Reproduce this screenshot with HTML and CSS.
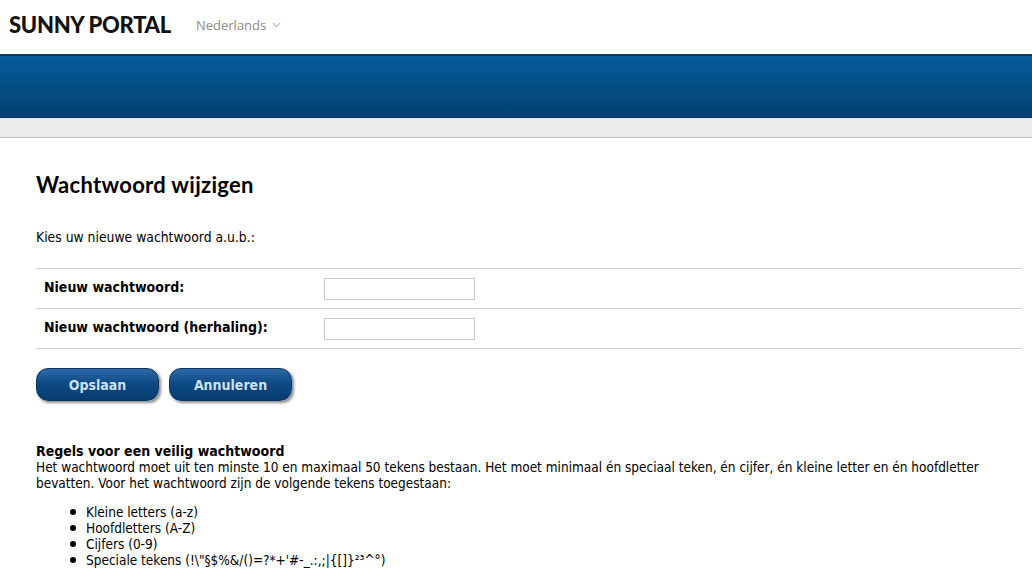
FILE: index.html
```html
<!DOCTYPE html>
<html lang="nl">
<head>
  <meta charset="UTF-8" />
  <title>Sunny Portal - Wachtwoord wijzigen</title>
  <link rel="stylesheet" href="styles.css">
</head>
<body>
  <header class="topbar">
    <div class="logo">SUNNY PORTAL</div>
    <div class="lang">Nederlands
      <svg class="chev" width="9" height="6" viewBox="0 0 9 6"><path d="M1 1 L4.5 4.5 L8 1" fill="none" stroke="#bbb" stroke-width="1.2"/></svg>
    </div>
  </header>
  <div class="banner"></div>
  <div class="subbar"></div>

  <main class="content">
    <h1>Wachtwoord wijzigen</h1>
    <p class="intro">Kies uw nieuwe wachtwoord a.u.b.:</p>

    <div class="form-table">
      <div class="form-row">
        <label>Nieuw wachtwoord:</label>
        <input type="password">
      </div>
      <div class="form-row">
        <label>Nieuw wachtwoord (herhaling):</label>
        <input type="password">
      </div>
    </div>

    <div class="buttons">
      <button class="btn">Opslaan</button>
      <button class="btn">Annuleren</button>
    </div>

    <div class="rules">
      <strong>Regels voor een veilig wachtwoord</strong><br>
      Het wachtwoord moet uit ten minste 10 en maximaal 50 tekens bestaan. Het moet minimaal én speciaal teken, én cijfer, én kleine letter en én hoofdletter bevatten. Voor het wachtwoord zijn de volgende tekens toegestaan:
      <ul>
        <li>Kleine letters (a-z)</li>
        <li>Hoofdletters (A-Z)</li>
        <li>Cijfers (0-9)</li>
        <li>Speciale tekens (!\"§$%&amp;/()=?*+'#-_.:,;|{[]}²³^°)</li>
      </ul>
    </div>
  </main>
</body>
</html>
```

FILE: styles.css
```css
* { margin: 0; padding: 0; box-sizing: border-box; }

body {
  font-family: 'DejaVu Sans Condensed', 'DejaVu Sans', sans-serif;
  font-size: 13.5px;
  color: #000;
  background: #fff;
}

/* header */
.topbar {
  height: 54px;
  display: flex;
  align-items: center;
  padding: 0 0 6px 9px;
}
.logo {
  font-family: 'Lato', sans-serif;
  font-weight: 900;
  font-size: 22px;
  letter-spacing: -0.3px;
  color: #111;
}
.lang {
  margin-left: 25px;
  font-family: 'Open Sans', sans-serif;
  font-size: 13px;
  color: #8a8a8a;
  display: flex;
  align-items: center;
  gap: 6px;
  padding-top: 2px;
}

.banner {
  height: 64px;
  border-top: 2px solid #0b3a5f;
  border-bottom: 1px solid #02325a;
  background: linear-gradient(#055c9c, #03406f);
}
.subbar {
  height: 20px;
  background: #ebebeb;
  border-bottom: 1px solid #bdbdbd;
}

/* content */
.content {
  padding: 33px 10px 0 36px;
}
h1 {
  font-family: 'Lato', sans-serif;
  font-weight: 700;
  font-size: 22px;
  letter-spacing: 0.3px;
  color: #000;
  margin-bottom: 31px;
}
.intro {
  margin-bottom: 23px;
  font-size: 13.8px;
}

.form-table {
  border-top: 1px solid #cfcfcf;
}
.form-row {
  height: 40px;
  display: flex;
  align-items: center;
  border-bottom: 1px solid #cfcfcf;
  padding-left: 8px;
}
.form-row label {
  font-weight: bold;
  font-size: 14px;
  width: 280px;
  padding-bottom: 4px;
}
.form-row input {
  width: 151px;
  height: 22px;
  border: 1px solid #c8c8c8;
  background: #fff;
}

.buttons {
  display: flex;
  gap: 10px;
  margin-top: 19px;
}
.btn {
  width: 123px;
  height: 33px;
  border: 1px solid #0a3560;
  border-radius: 12px;
  background: linear-gradient(#2d6aa6, #0d4a86 45%, #063c70);
  box-shadow: 2px 2px 3px rgba(0, 0, 0, 0.45);
  color: #cfe0f2;
  font-family: 'DejaVu Sans Condensed', 'DejaVu Sans', sans-serif;
  font-weight: bold;
  font-size: 14px;
}

.rules {
  margin-top: 42px;
  line-height: 16px;
  padding-right: 20px;
}
.rules strong {
  font-size: 14px;
}
.rules ul {
  margin-top: 13px;
  padding-left: 50px;
  list-style: none;
}
.rules li::before {
  content: '';
  display: inline-block;
  width: 6px;
  height: 6px;
  border-radius: 50%;
  background: #000;
  margin: 0 10px 2px -16px;
  vertical-align: middle;
}
```
